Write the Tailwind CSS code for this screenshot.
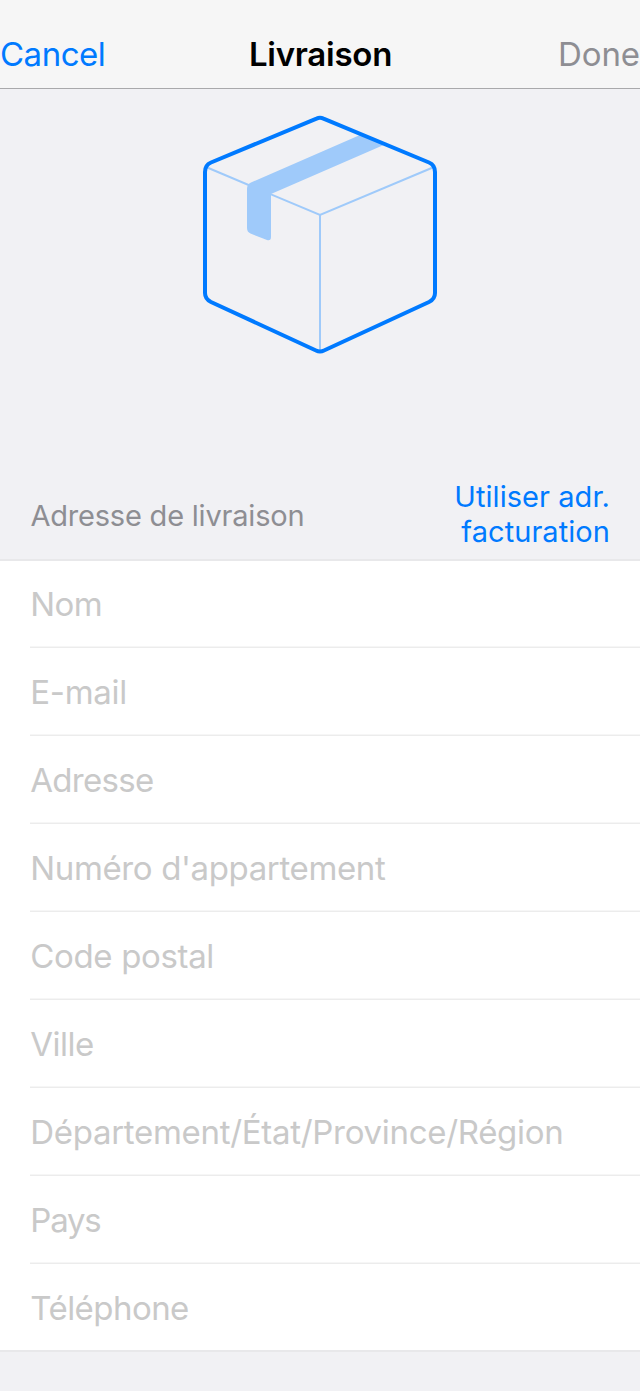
<!DOCTYPE html>
<html lang="fr"><head><meta charset="utf-8"><title>Livraison</title>
<script src="https://cdn.jsdelivr.net/npm/@tailwindcss/browser@4"></script></head>
<body class="bg-[#f1f1f4] font-['Inter',sans-serif] w-[640px] h-[1392px] overflow-hidden border-b border-white">
<header class="h-[89px] bg-[#f6f6f6] border-b border-[#a9a9ab] pt-[34px] grid grid-cols-3 items-start text-[33px] leading-10 whitespace-nowrap">
<button class="text-left text-[#007aff] tracking-[-0.5px]">Cancel</button>
<h1 class="pl-px text-center font-semibold tracking-[-0.25px]">Livraison</h1>
<button class="text-right text-[#8e8e93] tracking-[-0.1px]">Done</button>
</header>
<main>
<div class="h-[382px] pt-6 flex justify-center items-start">
<svg class="block" width="240" height="244" viewBox="200 113 240 244" fill="none">
<path d="M206 167L320 215L434 167M320 215V351" stroke="#9fcafa" stroke-width="2"/>
<path d="M360 135L251 182.500Q247 184 247 189V228Q247 232 250.500 233.500L267 240Q271 241 271 237V194L386 144Z" fill="#9fcafa"/>
<path d="M316.500 118.600Q320 117 323.500 118.600L429 162.500Q435 165 435 172V293Q435 299 429 302L324 350.500Q320 352.500 316 350.500L211 302Q205 299 205 293V172Q205 165 211 162.500Z" stroke="#007aff" stroke-width="4"/>
</svg>
</div>
<section>
<div class="h-[88px] px-[30px] pt-2 flex justify-between items-start text-[29px] leading-[35px]">
<h2 class="mt-[19px] pl-[0.4px] text-[#8e8e93] tracking-[-0.2px]">Adresse de livraison</h2>
<button class="text-right text-[#007aff] tracking-[0.06px]">Utiliser adr.<br>facturation</button>
</div>
<form class="border-t-2 border-[#e8e8ea] bg-white text-[33px]">
<div class="pl-[30px]"><input class="block w-full h-[87px] pl-[0.3px] border-b border-[#ececec] shadow-[inset_0_-1px_#f6f6f6] tracking-[-0.6px] placeholder:text-[#c9c9c9] placeholder:opacity-100 outline-none" placeholder="Nom"></div>
<div class="pl-[30px]"><input class="block w-full h-[88px] pl-[0.3px] pt-px border-b border-[#ececec] shadow-[inset_0_-1px_#f6f6f6] tracking-[-0.3px] placeholder:text-[#c9c9c9] placeholder:opacity-100 outline-none" placeholder="E-mail"></div>
<div class="pl-[30px]"><input class="block w-full h-[88px] pl-[0.3px] pt-px border-b border-[#ececec] shadow-[inset_0_-1px_#f6f6f6] tracking-[-0.7px] placeholder:text-[#c9c9c9] placeholder:opacity-100 outline-none" placeholder="Adresse"></div>
<div class="pl-[30px]"><input class="block w-full h-[88px] pl-[0.3px] pt-px border-b border-[#ececec] shadow-[inset_0_-1px_#f6f6f6] tracking-[-0.37px] placeholder:text-[#c9c9c9] placeholder:opacity-100 outline-none" placeholder="Numéro d'appartement"></div>
<div class="pl-[30px]"><input class="block w-full h-[88px] pl-[0.3px] pt-px border-b border-[#ececec] shadow-[inset_0_-1px_#f6f6f6] tracking-[-0.35px] placeholder:text-[#c9c9c9] placeholder:opacity-100 outline-none" placeholder="Code postal"></div>
<div class="pl-[30px]"><input class="block w-full h-[88px] pl-[0.3px] pt-px border-b border-[#ececec] shadow-[inset_0_-1px_#f6f6f6] tracking-[-0.5px] placeholder:text-[#c9c9c9] placeholder:opacity-100 outline-none" placeholder="Ville"></div>
<div class="pl-[30px]"><input class="block w-full h-[88px] pl-[0.3px] pt-px border-b border-[#ececec] shadow-[inset_0_-1px_#f6f6f6] tracking-[-0.3px] placeholder:text-[#c9c9c9] placeholder:opacity-100 outline-none" placeholder="Département/État/Province/Région"></div>
<div class="pl-[30px]"><input class="block w-full h-[88px] pl-[0.3px] pt-px border-b border-[#ececec] shadow-[inset_0_-1px_#f6f6f6] tracking-[-1.2px] placeholder:text-[#c9c9c9] placeholder:opacity-100 outline-none" placeholder="Pays"></div>
<div class="pl-[30px] border-b-2 border-[#e8e8ea]"><input class="block w-full h-[86px] pl-[0.3px] pt-0.5 tracking-[-0.55px] placeholder:text-[#c9c9c9] placeholder:opacity-100 outline-none" placeholder="Téléphone"></div>
</form>
</section>
</main>
</body></html>
